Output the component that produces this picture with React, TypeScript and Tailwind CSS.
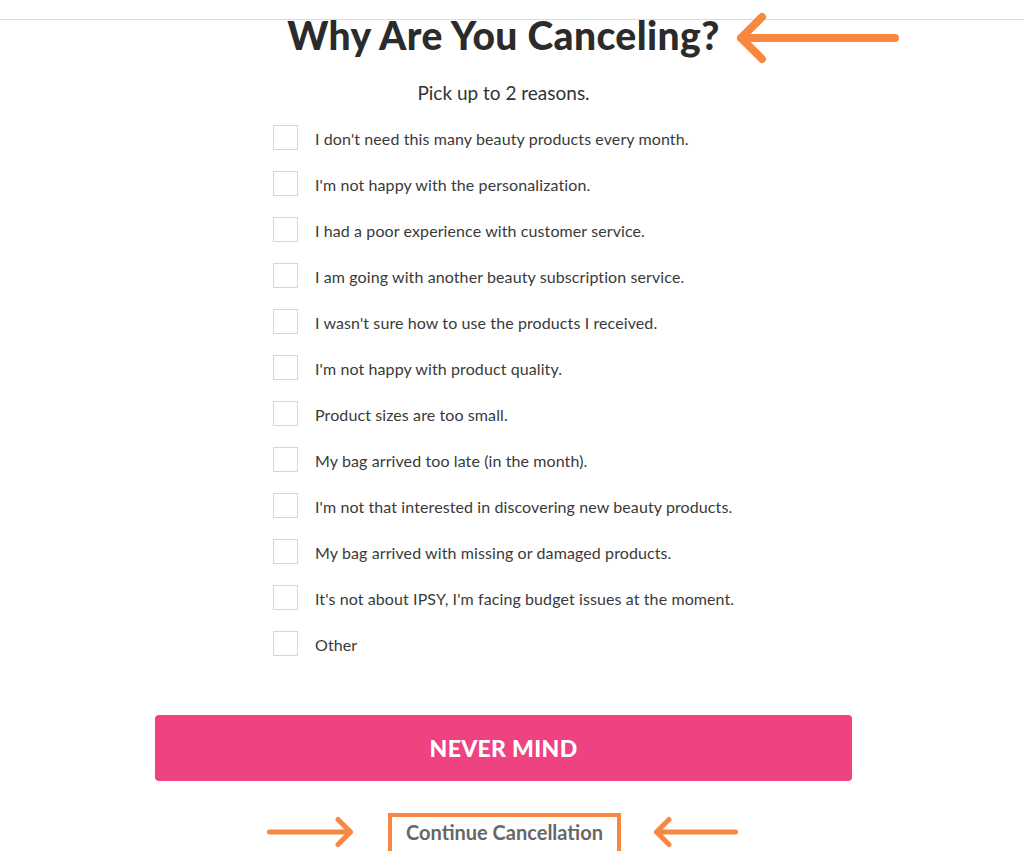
const reasons = [
  "I don't need this many beauty products every month.",
  "I'm not happy with the personalization.",
  'I had a poor experience with customer service.',
  'I am going with another beauty subscription service.',
  "I wasn't sure how to use the products I received.",
  "I'm not happy with product quality.",
  'Product sizes are too small.',
  'My bag arrived too late (in the month).',
  "I'm not that interested in discovering new beauty products.",
  'My bag arrived with missing or damaged products.',
  "It's not about IPSY, I'm facing budget issues at the moment.",
  'Other',
];

function Arrow({ dir, w, h, stroke }: { dir: 'left' | 'right'; w: number; h: number; stroke: number }) {
  const s = stroke / 2 + 1;
  const head = h / 2 - s;
  const d =
    dir === 'left'
      ? `M${w - s} ${h / 2} L${s} ${h / 2} M${s + head} ${s} L${s} ${h / 2} L${s + head} ${h - s}`
      : `M${s} ${h / 2} L${w - s} ${h / 2} M${w - s - head} ${s} L${w - s} ${h / 2} L${w - s - head} ${h - s}`;
  return (
    <svg width={w} height={h} viewBox={`0 0 ${w} ${h}`} fill="none">
      <path d={d} stroke="#f8873f" strokeWidth={stroke} strokeLinecap="round" strokeLinejoin="round" />
    </svg>
  );
}

export default function App() {
  return (
    <div
      className="relative w-[1024px] h-[851px] overflow-hidden bg-white text-[#333]"
      style={{ fontFamily: 'Lato, "Open Sans", sans-serif' }}
    >
      {/* top rule */}
      <div className="h-[20px] border-b border-[#dcdcdc]" />

      <div className="w-[1007px]">
        <h1 className="-mt-[3px] text-center text-[39px] leading-[36px] font-black text-[#2b2b2b] tracking-[0.4px]">
          Why Are You Canceling?
        </h1>

        <p className="mt-[28px] text-center text-[19px] leading-[24px] text-[#333]">Pick up to 2 reasons.</p>
      </div>

      {/* REASONS */}
      <ul className="ml-[273px] mt-[9px]">
        {reasons.map((r) => (
          <li key={r} className="flex items-center h-[46px]">
            <span className="w-[25px] h-[25px] border border-[#d6d6d6] bg-white shrink-0" />
            <span className="ml-[17px] mt-[3px] text-[16px] tracking-[0.1px] text-[#3a3a3a]">{r}</span>
          </li>
        ))}
      </ul>

      <button className="block ml-[155px] mt-[49px] w-[697px] h-[66px] rounded-[4px] bg-[#ee4380] text-white text-[23px] font-black tracking-[0.3px]">
        NEVER MIND
      </button>

      <div className="mt-[32px] ml-[388px] w-[233px] h-[42px] border-[4px] border-[#f8873f] flex items-start justify-center pt-[2px]">
        <span className="text-[20px] leading-[26px] font-bold text-[#676767]">Continue Cancellation</span>
      </div>

      {/* annotation arrows */}
      <div className="absolute left-[736px] top-[12px]">
        <Arrow dir="left" w={164} h={52} stroke={8} />
      </div>
      <div className="absolute left-[266px] top-[816px]">
        <Arrow dir="right" w={88} h={32} stroke={5} />
      </div>
      <div className="absolute left-[653px] top-[816px]">
        <Arrow dir="left" w={86} h={32} stroke={5} />
      </div>
    </div>
  );
}
